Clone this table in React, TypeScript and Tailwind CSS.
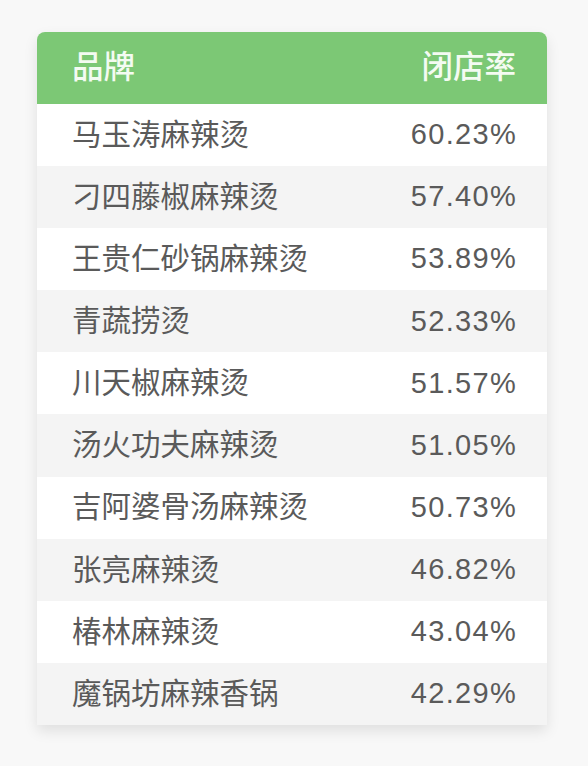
const rows = [
  { name: "马玉涛麻辣烫", rate: "60.23%" },
  { name: "刁四藤椒麻辣烫", rate: "57.40%" },
  { name: "王贵仁砂锅麻辣烫", rate: "53.89%" },
  { name: "青蔬捞烫", rate: "52.33%" },
  { name: "川天椒麻辣烫", rate: "51.57%" },
  { name: "汤火功夫麻辣烫", rate: "51.05%" },
  { name: "吉阿婆骨汤麻辣烫", rate: "50.73%" },
  { name: "张亮麻辣烫", rate: "46.82%" },
  { name: "椿林麻辣烫", rate: "43.04%" },
  { name: "魔锅坊麻辣香锅", rate: "42.29%" },
];

const font = {
  fontFamily: '"Liberation Sans", "Noto Sans CJK SC", sans-serif',
};

export default function App() {
  return (
    <div className="w-[588px] h-[766px] bg-[#f8f8f8] pt-[32px] pl-[37px]" style={font}>
      <div className="w-[510px] rounded-t-[8px] overflow-hidden shadow-[0_6px_14px_rgba(0,0,0,0.10)]">
        <div className="h-[72px] bg-[#7cc875] flex items-center justify-between pl-[35px] pr-[31px] text-[31.5px] font-medium text-[#f4fbf2]">
          <span>品牌</span>
          <span>闭店率</span>
        </div>
        {rows.map((row, i) => (
          <div
            key={row.name}
            className={
              "h-[62.1px] flex items-center justify-between pl-[35px] pr-[30px] text-[29.5px] text-[#5a5a5a] " +
              (i % 2 === 0 ? "bg-white" : "bg-[#f4f4f4]")
            }
          >
            <span>{row.name}</span>
            <span className="text-[29px] tracking-[1.3px]">{row.rate}</span>
          </div>
        ))}
      </div>
    </div>
  );
}
